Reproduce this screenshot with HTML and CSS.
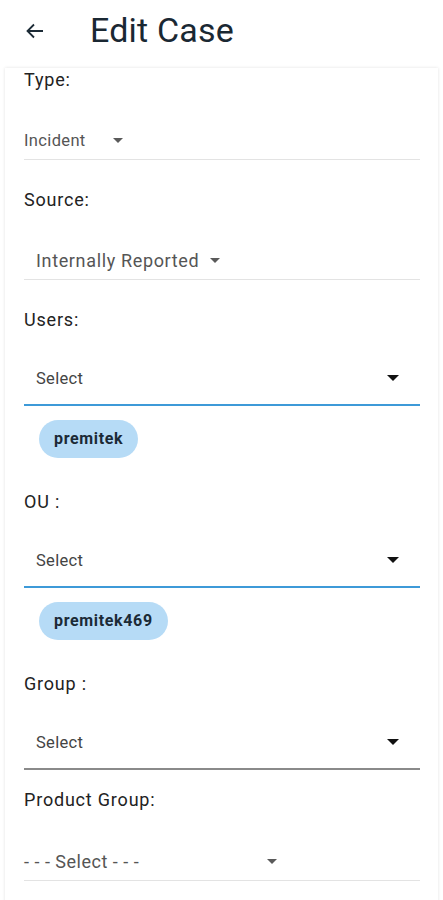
FILE: index.html
```html
<!DOCTYPE html>
<html>
<head>
<meta charset="utf-8">
<link rel="stylesheet" href="styles.css">
</head>
<body>
<header class="topbar">
  <svg class="back" viewBox="0 0 24 24" width="24" height="24"><path d="M20 12H5M11 5.5 4.5 12 11 18.5" fill="none" stroke="#1c2b36" stroke-width="1.8"/></svg>
  <h1 class="title">Edit Case</h1>
</header>
<main class="card">
  <div class="label first">Type:</div>
  <div class="plain">
    <span class="val small">Incident</span>
    <span class="tri grey gap-type"></span>
  </div>

  <div class="label">Source:</div>
  <div class="plain">
    <span class="val indent">Internally Reported</span>
    <span class="tri grey gap-src"></span>
  </div>

  <div class="label">Users:</div>
  <div class="mselect blue">
    <span class="mval">Select</span>
    <span class="tri dark"></span>
  </div>
  <div class="chips"><span class="chip">premitek</span></div>

  <div class="label after-chip">OU :</div>
  <div class="mselect blue">
    <span class="mval">Select</span>
    <span class="tri dark"></span>
  </div>
  <div class="chips"><span class="chip">premitek469</span></div>

  <div class="label after-chip">Group :</div>
  <div class="mselect grey-line">
    <span class="mval">Select</span>
    <span class="tri dark"></span>
  </div>

  <div class="label after-grp">Product Group:</div>
  <div class="plain product">
    <span class="val dashed">- - - Select - - -</span>
    <span class="tri grey gap-prod"></span>
  </div>
</main>
</body>
</html>
```
FILE: styles.css
```css
* { box-sizing: border-box; }
html, body { margin: 0; padding: 0; background: #ffffff; }
body {
  font-family: Roboto, "Noto Sans", "Liberation Sans", sans-serif;
  color: #222;
  width: 443px;
  height: 900px;
  overflow: hidden;
}
.topbar {
  height: 62px;
  display: flex;
  align-items: center;
  padding-left: 23px;
}
.back { display: block; margin-top: -1px; }
.title {
  margin: 0 0 0 43px;
  font-weight: 400;
  font-size: 34px;
  color: #1a2833;
  letter-spacing: 0.2px;
  line-height: 40px;
  margin-top: -2px;
}
.card {
  margin: 0 5px;
  padding: 0 18px 18px 19px;
  background: #fff;
  box-shadow: 0 0 3px rgba(0,0,0,0.12);
  border-bottom: 1px solid #e2e2e2;
  height: 836px;
}
.label {
  height: 24px;
  line-height: 24px;
  font-size: 18px;
  letter-spacing: 0.8px;
  color: #222;
  margin-top: 28px;
}
.label.first { margin-top: 6px; }
.label.after-chip { margin-top: 32px; }
.label.after-grp { margin-top: 18px; }
.plain {
  height: 39px;
  margin-top: 29px;
  display: flex;
  align-items: center;
  border-bottom: 1px solid #e3e3e3;
}
.plain.product { margin-top: 30px; }
.val { font-size: 18px; letter-spacing: 0.65px; color: #555; }
.val.small { font-size: 16.5px; letter-spacing: 0.35px; }
.val.indent { padding-left: 12px; }
.val.dashed { font-size: 18px; letter-spacing: 0.5px; color: #555; }
.tri {
  width: 0; height: 0;
  border-left: 5px solid transparent;
  border-right: 5px solid transparent;
  border-top: 5px solid #555;
}
.tri.grey { border-top-color: #5a5a5a; }
.tri.dark { border-top-color: #111; border-left-width: 6px; border-right-width: 6px; border-top-width: 6px; }
.gap-type { margin-left: 27px; }
.gap-src { margin-left: 11px; }
.gap-prod { margin-left: 128px; }
.mselect {
  margin-top: 20px;
  height: 54px;
  display: flex;
  align-items: center;
  justify-content: space-between;
  padding: 0 21px 0 12px;
}
.mselect.blue { border-bottom: 2px solid #3d9ad8; }
.mselect.grey-line { border-bottom: 2px solid #8a8a8a; }
.mval { font-size: 16.5px; letter-spacing: 0.3px; color: #444; }
.chips { margin-top: 14px; padding-left: 15px; display: flex; }
.chip {
  height: 38px;
  line-height: 38px;
  padding: 0 15px;
  border-radius: 19px;
  background: #b6dbf6;
  color: #1b2a36;
  font-weight: 700;
  font-size: 16px;
  letter-spacing: 0.65px;
}
```
